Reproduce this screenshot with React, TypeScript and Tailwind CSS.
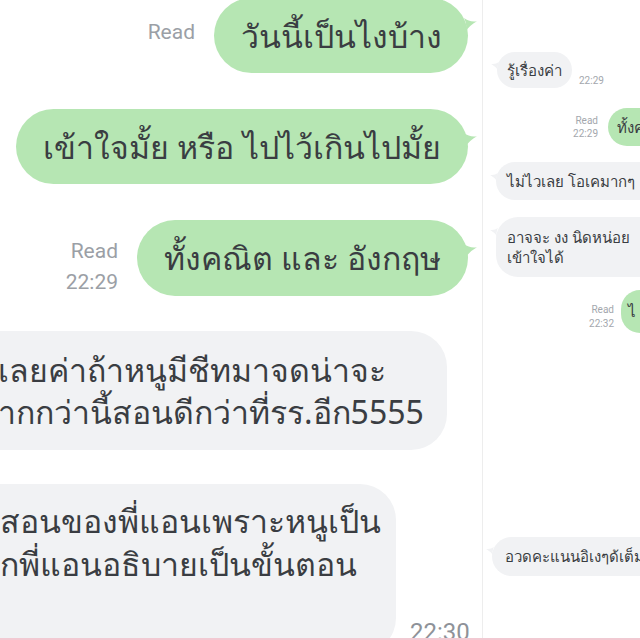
import * as React from "react";

const thai = "font-['Noto_Sans',_'DejaVu_Sans',_sans-serif]";
const latin = "font-['Roboto',_'Liberation_Sans',_sans-serif]";

// small speech-bubble tail
const TailRight = ({ color, className }: { color: string; className: string }) => (
  <svg viewBox="0 0 12 14" className={`absolute ${className}`} style={{ fill: color }}>
    <path d="M0 0 Q4 8 0 14 Q6 6 12 3 Q5 4 0 0 Z" />
  </svg>
);

const TailLeft = ({ color, className }: { color: string; className: string }) => (
  <svg viewBox="0 0 12 14" className={`absolute ${className}`} style={{ fill: color }}>
    <path d="M12 0 Q8 8 12 14 Q6 6 0 3 Q7 4 12 0 Z" />
  </svg>
);

const GREEN = "#b6e6b3";
const GRAY = "#f1f2f4";

export default function App() {
  return (
    <div className="flex h-[640px] w-[640px] overflow-hidden bg-white border-b-2 border-[#f2c9d2]">
      {/* zoomed conversation */}
      <div className={`relative w-[482px] shrink-0 overflow-hidden ${thai} text-[#3a3d42]`}>
        <div className="mt-[-2px] flex items-center justify-end pr-[14px]">
          <span className={`mr-[19px] mb-[6px] text-[21px] text-[#9b9fa6] ${latin}`}>Read</span>
          <div className="relative flex h-[75px] w-[254px] items-center justify-center rounded-full bg-[#b6e6b3] text-[32px]">
            วันนี้เป็นไงบ้าง
            <TailRight color={GREEN} className="right-[-9px] top-[20px] h-[15px] w-[13px]" />
          </div>
        </div>

        <div className="mt-[36px] flex justify-end pr-[14px]">
          <div className="relative flex h-[75px] w-[452px] items-center justify-center rounded-full bg-[#b6e6b3] text-[32px]">
            เข้าใจมั้ย หรือ ไปไว้เกินไปมั้ย
            <TailRight color={GREEN} className="right-[-9px] top-[24px] h-[15px] w-[13px]" />
          </div>
        </div>

        <div className="mt-[36px] flex items-end justify-end pr-[14px]">
          <div className={`mr-[19px] mb-[-2px] flex flex-col items-end text-[21px] leading-[31px] text-[#9b9fa6] ${latin}`}>
            <span>Read</span>
            <span>22:29</span>
          </div>
          <div className="relative flex h-[76px] w-[331px] items-center justify-center rounded-full bg-[#b6e6b3] text-[32px]">
            ทั้งคณิต และ อังกฤษ
            <TailRight color={GREEN} className="right-[-9px] top-[24px] h-[15px] w-[13px]" />
          </div>
        </div>

        <div className="mt-[35px] flex">
          <div className="ml-[-40px] flex h-[119px] w-[487px] flex-col justify-center rounded-[36px] bg-[#f1f2f4] pl-[38px] text-[32px] leading-[42px] whitespace-nowrap">
            <span>เลยค่าถ้าหนูมีชีทมาจดน่าจะ</span>
            <span>ากกว่านี้สอนดีกว่าที่รร.อีก5555</span>
          </div>
        </div>

        <div className="mt-[34px] flex items-end">
          <div className="ml-[-40px] flex h-[170px] w-[436px] flex-col rounded-[36px] bg-[#f1f2f4] pt-[15px] pl-[40px] text-[32px] leading-[43px] whitespace-nowrap">
            <span>สอนของพี่แอนเพราะหนูเป็น</span>
            <span>กพี่แอนอธิบายเป็นขั้นตอน</span>
          </div>
          <span className={`ml-[14px] mb-[4px] text-[24px] text-[#8e9299] ${latin}`}>22:30</span>
        </div>
      </div>

      {/* original size conversation */}
      <div className={`flex-1 overflow-hidden border-l border-[#ededed] ${thai} text-[15px] text-[#3a3d42]`}>
        <div className="mt-[52px] flex items-end pl-[14px]">
          <div className="relative flex h-[36px] items-center rounded-full bg-[#f1f2f4] px-[10px]">
            รู้เรื่องค่า
            <TailLeft color={GRAY} className="left-[-6px] top-[10px] h-[9px] w-[8px]" />
          </div>
          <span className={`ml-[7px] text-[10px] text-[#a3a7ad] ${latin}`}>22:29</span>
        </div>

        <div className="mt-[20px] flex items-center justify-end">
          <div className={`mr-[10px] flex flex-col items-end text-[10px] leading-[13px] text-[#a3a7ad] ${latin}`}>
            <span>Read</span>
            <span>22:29</span>
          </div>
          <div className="flex h-[38px] w-[32px] items-center overflow-hidden rounded-l-full bg-[#b6e6b3] pl-[9px] whitespace-nowrap">
            ทั้งคณิต
          </div>
        </div>

        <div className="relative mt-[16px] ml-[13px] flex h-[38px] items-center rounded-l-full bg-[#f1f2f4] pl-[11px] whitespace-nowrap">
          ไม่ไวเลย โอเคมากๆ
          <TailLeft color={GRAY} className="left-[-6px] top-[11px] h-[9px] w-[8px]" />
        </div>

        <div className="relative mt-[17px] ml-[13px] flex h-[60px] flex-col justify-center rounded-l-[22px] bg-[#f1f2f4] pl-[11px] leading-[20px] whitespace-nowrap">
          <span>อาจจะ งง นิดหน่อย</span>
          <span>เข้าใจได้</span>
          <TailLeft color={GRAY} className="left-[-6px] top-[11px] h-[9px] w-[8px]" />
        </div>

        <div className="mt-[13px] flex items-end justify-end">
          <div className={`mr-[7px] mb-[2px] flex flex-col items-end text-[10px] leading-[14px] text-[#a3a7ad] ${latin}`}>
            <span>Read</span>
            <span>22:32</span>
          </div>
          <div className="flex h-[43px] w-[19px] items-center overflow-hidden rounded-l-full bg-[#b6e6b3] pl-[7px] whitespace-nowrap">
            ไ
          </div>
        </div>

        <div className="relative mt-[204px] ml-[9px] flex h-[39px] items-center rounded-l-full bg-[#f1f2f4] pl-[13px] whitespace-nowrap">
          อวดคะแนนอิเงๆด้เต็ม
          <TailLeft color={GRAY} className="left-[-6px] top-[10px] h-[9px] w-[8px]" />
        </div>
      </div>
    </div>
  );
}
